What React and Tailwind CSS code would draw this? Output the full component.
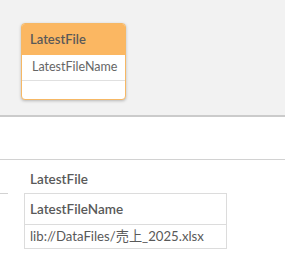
export default function App() {
  const font = { fontFamily: '"Lato", "Noto Sans CJK JP", sans-serif' };
  return (
    <div className="w-[285px] h-[280px] bg-white overflow-hidden" style={font}>
      <div className="h-[117px] bg-[#f2f2f2] pt-[23px] pl-[21px] border-b-2 border-[#cbcbcb]">
        <div className="w-[105px] rounded-[4px] border border-[#f6b865] bg-white overflow-hidden shadow-[0_1px_3px_rgba(0,0,0,0.25)]">
          <div className="h-[31px] bg-[#fbb762] flex items-center pl-[8px] text-[13px] font-semibold text-[#595959]">LatestFile</div>
          <div className="h-[26px] flex items-center pl-[10px] text-[12.5px] text-[#666] border-b border-[#e0e0e0]">LatestFileName</div>
          <div className="h-[18px]" />
        </div>
      </div>
      <div className="h-[43px] border-b border-[#d2d2d2]" />
      <div className="flex">
        <div className="w-[8px] h-[34px] border-b border-[#d2d2d2]" />
        <div className="ml-[16px] flex flex-col">
          <div className="h-[33px] flex items-center pt-[6px] pl-[6px] text-[13.5px] font-semibold text-[#595959]">LatestFile</div>
          <div className="w-[203px] border border-[#dcdcdc]">
            <div className="h-[31px] flex items-center pl-[5px] text-[13.5px] font-semibold text-[#595959] border-b border-[#dcdcdc]">LatestFileName</div>
            <div className="h-[23px] flex items-center pl-[5px] text-[13.2px] text-[#595959]">lib://DataFiles/売上_2025.xlsx</div>
          </div>
        </div>
      </div>
    </div>
  );
}
